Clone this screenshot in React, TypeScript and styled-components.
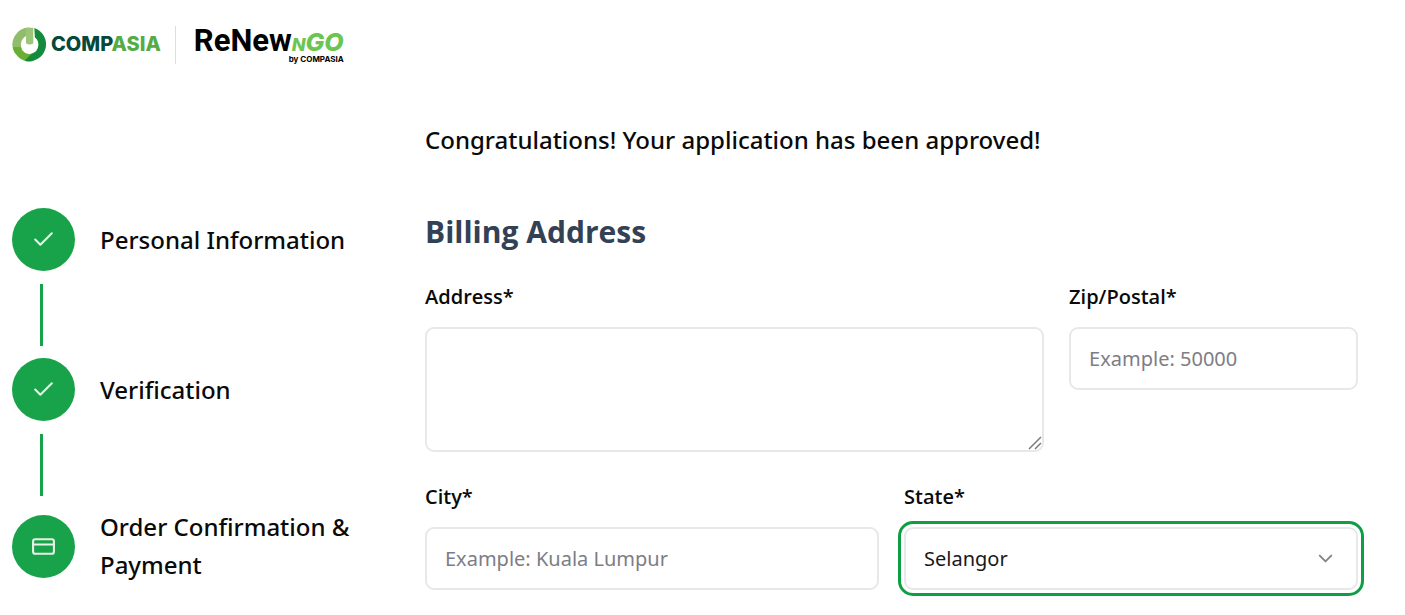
import React from "react";
import styled, { createGlobalStyle } from "styled-components";
import { Check, ChevronDown, CreditCard } from "lucide-react";

const GlobalStyle = createGlobalStyle`
  *, *::before, *::after { box-sizing: border-box; }
  body {
    margin: 0;
    background: #fff;
    color: #0a0a0a;
    font-family: "Open Sans", "Noto Sans", sans-serif;
  }
`;

const Page = styled.div`
  padding: 24px 47px 20px 12px;
`;

const Header = styled.header`
  display: flex;
  align-items: center;
  height: 42px;
`;

const CompAsia = styled.a`
  display: flex;
  align-items: center;
  gap: 4px;
  margin-bottom: 2px;
  color: #06483a;
  font: 800 20px/24px Inter, sans-serif;
  text-decoration: none;
`;

const Leaf = styled.span`
  color: #55ab46;
`;

const Divider = styled.span`
  width: 1px;
  height: 38px;
  margin: 0 18px 0 14px;
  background: #dedede;
`;

const Renew = styled.a`
  display: flex;
  flex-direction: column;
  color: #000;
  text-decoration: none;
`;

const RenewName = styled.span`
  display: flex;
  align-items: baseline;
  font: 700 31px/28px Roboto, sans-serif;
`;

const Go = styled.span<{ $size: number }>`
  color: #6cc551;
  font: italic 800 ${(p) => p.$size}px/20px Inter, sans-serif;
`;

const Byline = styled.span`
  align-self: flex-end;
  font: 700 8px/8px Inter, sans-serif;
`;

const Body = styled.div`
  display: grid;
  grid-template-columns: minmax(0, 388fr) minmax(0, 933fr);
  column-gap: 25px;
  margin-top: 55px;
`;

const Steps = styled.ol`
  list-style: none;
  margin: 87px 0 0;
  padding: 0;
`;

const StepItem = styled.li`
  &:not(:last-child)::after {
    content: "";
    display: block;
    width: 3px;
    height: 62px;
    margin: 13px 0 12px 28px;
    background: #16a34a;
  }
`;

const StepRow = styled.div`
  display: flex;
  align-items: center;
  gap: 25px;
`;

const StepBadge = styled.span`
  display: flex;
  flex: none;
  align-items: center;
  justify-content: center;
  width: 63px;
  height: 63px;
  border-radius: 50%;
  background: #18a34a;
  color: #e9f2e6;
`;

const leadText = `
  font-family: "Noto Sans", "Open Sans", sans-serif;
  font-size: 24px;
  font-weight: 500;
  line-height: 38px;
`;

const StepLabel = styled.span`
  ${leadText}
  max-width: 300px;
`;

const Notice = styled.p`
  ${leadText}
  margin: 0;
`;

const Title = styled.h1`
  margin: 53px 0 0;
  color: #334155;
  font-size: 30px;
  font-weight: 700;
  line-height: 40px;
`;

const Row = styled.div<{ $columns: string }>`
  display: grid;
  grid-template-columns: ${(p) => p.$columns};
  column-gap: 25px;
  margin-top: 29px;
`;

const Field = styled.div`
  min-width: 0;
`;

const Label = styled.label`
  display: block;
  margin-bottom: 14px;
  font-size: 20px;
  font-weight: 600;
  line-height: 32px;
`;

const controlStyle = `
  display: block;
  width: 100%;
  height: 63px;
  margin: 0;
  padding: 0 18px;
  border: 2px solid #e8e8e8;
  border-radius: 9px;
  background: #fff;
  color: #18181b;
  font: 400 20px/32px "Noto Sans", "Open Sans", sans-serif;
  outline: none;
`;

const Input = styled.input`
  ${controlStyle}
  &::placeholder { color: #7d7d85; opacity: 1; }
`;

const ControlBox = styled.div`
  position: relative;
`;

const TextArea = styled.textarea`
  ${controlStyle}
  height: 125px;
  padding: 12px 18px;
  resize: none;
`;

const Grip = styled.svg`
  position: absolute;
  right: 2px;
  bottom: 2px;
  pointer-events: none;
`;

const Select = styled.select`
  ${controlStyle}
  appearance: none;
  outline: 3px solid #0f9f43;
  outline-offset: 3px;
`;

const Arrow = styled(ChevronDown)`
  position: absolute;
  top: 20px;
  right: 21px;
  color: #858585;
  pointer-events: none;
`;

const PowerMark = () => (
  <svg width="35" height="35" viewBox="0 0 35 35" aria-hidden="true">
    <path d="M17.5 0.5A17 17 0 0 0 3 26.5L10 22A9.3 9.3 0 0 1 12 10.5L17.5 7Z" fill="#8fbd6b" />
    <path d="M0.8 20A17 17 0 0 0 22 33.8L20 26.6A9.3 9.3 0 0 1 8.6 20Z" fill="#69ae35" />
    <path d="M21.5 0.8A17 17 0 0 1 12.5 33.7L20 26.6A9.3 9.3 0 0 0 21.5 9.6Z" fill="#148a3c" />
    <path d="M12.5 10V17Q17.5 20.5 22.8 17V9L22.3 0.6H21V8Z" fill="#fff" />
    <path d="M14 0.8H21.3V16.5Q17.7 18.5 14 16.5Z" fill="#9cc578" />
  </svg>
);

type Step = { label: string; icon: React.ReactNode };

const steps: Step[] = [
  { label: "Personal Information", icon: <Check size={25} strokeWidth={2} /> },
  { label: "Verification", icon: <Check size={25} strokeWidth={2} /> },
  { label: "Order Confirmation & Payment", icon: <CreditCard size={25} strokeWidth={2} /> },
];

export default function App() {
  return (
    <Page>
      <GlobalStyle />
      <Header>
        <CompAsia href="#">
          <PowerMark />
          <span>COMP<Leaf>ASIA</Leaf></span>
        </CompAsia>
        <Divider />
        <Renew href="#">
          <RenewName>
            ReNew<Go $size={18}>N</Go><Go $size={25}>GO</Go>
          </RenewName>
          <Byline>by COMPASIA</Byline>
        </Renew>
      </Header>
      <Body>
        <Steps>
          {steps.map((step) => (
            <StepItem key={step.label}>
              <StepRow>
                <StepBadge>{step.icon}</StepBadge>
                <StepLabel>{step.label}</StepLabel>
              </StepRow>
            </StepItem>
          ))}
        </Steps>
        <main>
          <Notice>Congratulations! Your application has been approved!</Notice>
          <Title>Billing Address</Title>
          <form>
            <Row $columns="15fr 7fr">
              <Field>
                <Label htmlFor="address">Address*</Label>
                <ControlBox>
                  <TextArea id="address" />
                  <Grip width="14" height="14" viewBox="0 0 14 14" aria-hidden="true">
                    <path d="M1 13L13 1M7 13L13 7" stroke="#7b7b7b" strokeWidth="1.5" />
                  </Grip>
                </ControlBox>
              </Field>
              <Field>
                <Label htmlFor="zip">Zip/Postal*</Label>
                <Input id="zip" placeholder="Example: 50000" />
              </Field>
            </Row>
            <Row $columns="1fr 1fr">
              <Field>
                <Label htmlFor="city">City*</Label>
                <Input id="city" placeholder="Example: Kuala Lumpur" />
              </Field>
              <Field>
                <Label htmlFor="state">State*</Label>
                <ControlBox>
                  <Select id="state" defaultValue="Selangor">
                    <option>Selangor</option>
                  </Select>
                  <Arrow size={23} strokeWidth={2} />
                </ControlBox>
              </Field>
            </Row>
          </form>
        </main>
      </Body>
    </Page>
  );
}
